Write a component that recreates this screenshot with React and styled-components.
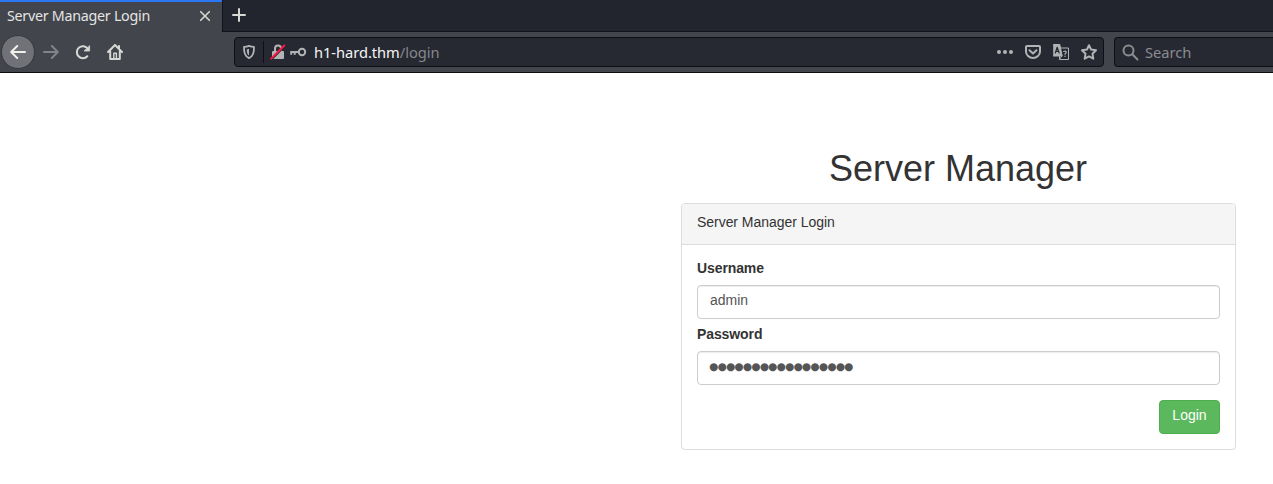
import React from "react";
import styled, { createGlobalStyle } from "styled-components";

const GlobalStyle = createGlobalStyle`
  * { box-sizing: border-box; }
  body { margin: 0; background: #fff; overflow: hidden; color: #333; font: 14px/20px "Liberation Sans", Arial, sans-serif; }
`;

const Browser = styled.header`
  height: 73px;
  background: #42454b;
  border-bottom: 1px solid #0c0c0d;
  font-family: "Noto Sans", sans-serif;
  overflow: hidden;
`;
const TabStrip = styled.div`
  display: flex;
  height: 32px;
  background: #22252e;
`;
const Tab = styled.div`
  display: flex;
  align-items: center;
  justify-content: space-between;
  width: 222px;
  height: 32px;
  padding: 0 11px 2px 7px;
  border-top: 2px solid #2a76f5;
  background: #42454b;
  color: #e3e4e3;
  font-size: 14.3px;
`;
const TabTitle = styled.span`
  letter-spacing: -0.28px;
  white-space: nowrap;
`;
const NewTab = styled.div`
  flex: 1;
  display: flex;
  align-items: center;
  padding: 0 0 1px 9px;
  border-left: 1px solid #10131a;
  border-bottom: 1px solid #10131a;
`;
const NavBar = styled.div`
  display: flex;
  align-items: center;
  height: 40px;
  padding-left: 1px;
`;
const BackButton = styled.div`
  display: grid;
  place-items: center;
  width: 34px;
  height: 34px;
  border: 1px solid #36383c;
  border-radius: 50%;
  background: #717277;
`;
const NavIcon = styled.div`
  display: grid;
  place-items: center;
  width: 32px;
  height: 32px;
`;
const Field = styled.div`
  display: flex;
  align-items: center;
  height: 30px;
  border: 1px solid #0f1016;
  border-radius: 4px;
  background: #272932;
  font-size: 14.67px;
`;
const AddressField = styled(Field)`
  width: 870px;
  margin-left: 103px;
  padding: 0 6px 0 6px;
`;
const SearchField = styled(Field)`
  flex: 1;
  margin-left: 10px;
  padding-left: 7px;
  gap: 6px;
  border-right: 0;
  border-radius: 4px 0 0 4px;
  color: #8b8c90;
`;
const Divider = styled.div`
  width: 1px;
  height: 22px;
  margin: 0 6px 0 6px;
  background: #0f1016;
`;
const KeySlot = styled.div`
  margin-left: 3px;
`;
const Url = styled.div`
  flex: 1;
  margin-left: 7px;
  color: #f5f5f6;
  letter-spacing: -0.04px;
  white-space: nowrap;
`;
const UrlPath = styled.span`
  color: #85878c;
`;
const PageActions = styled.div`
  display: flex;
  gap: 12px;
`;
const Icon = styled.svg`
  display: block;
  flex: none;
  fill: none;
  stroke: ${(p) => p.$color || "#d7d7d3"};
  stroke-width: ${(p) => p.$weight || 2};
  stroke-linecap: round;
  stroke-linejoin: round;
`;

const Page = styled.main`
  padding: 76px 0 0 681px;
`;
const LoginColumn = styled.section`
  width: 555px;
`;
const Heading = styled.h1`
  margin: 0 0 14px;
  padding-right: 1px;
  font-size: 36px;
  line-height: 40px;
  font-weight: 400;
  text-align: center;
`;
const Panel = styled.form`
  height: 247px;
  border: 1px solid #ddd;
  border-radius: 4px;
  box-shadow: 0 1px 1px rgba(0, 0, 0, 0.05);
`;
const PanelHeading = styled.div`
  height: 41px;
  padding: 8px 15px;
  border-bottom: 1px solid #ddd;
  border-radius: 3px 3px 0 0;
  background: #f5f5f5;
  letter-spacing: -0.04px;
`;
const PanelBody = styled.div`
  padding: 13px 15px 15px;
`;
const Label = styled.label`
  display: block;
  margin-bottom: 7px;
  font-weight: 700;
  letter-spacing: -0.1px;
`;
const Input = styled.div`
  height: 34px;
  margin-bottom: 5px;
  padding: 4px 12px;
  border: 1px solid #ccc;
  border-radius: 4px;
  box-shadow: inset 0 1px 1px rgba(0, 0, 0, 0.075);
  color: #555;
`;
const Secret = styled(Input)`
  margin-bottom: 15px;
  padding: 4px 11px;
  font-family: "DejaVu Sans", sans-serif;
  font-size: 10.5px;
  letter-spacing: -0.72px;
`;
const Actions = styled.div`
  display: flex;
  justify-content: flex-end;
`;
const LoginButton = styled.button`
  width: 61px;
  height: 34px;
  padding: 0 0 4px;
  border: 1px solid #4cae4c;
  border-radius: 4px;
  background: #5cb85c;
  color: #fff;
  font: inherit;
`;

const G = "#b2b3b5";

export default function App() {
  return (
    <>
      <GlobalStyle />
      <Browser>
        <TabStrip>
          <Tab>
            <TabTitle>Server Manager Login</TabTitle>
            <Icon width="12" height="12" viewBox="0 0 12 12" $weight={1.6}>
              <path d="M1.7 1.7l8.6 8.6M10.3 1.7l-8.6 8.6" />
            </Icon>
          </Tab>
          <NewTab>
            <Icon width="14" height="14" viewBox="0 0 14 14">
              <path d="M7 1v12M1 7h12" />
            </Icon>
          </NewTab>
        </TabStrip>
        <NavBar>
          <BackButton>
            <Icon width="16" height="16" viewBox="0 0 16 16" $color="#f0f0ec">
              <path d="M15 8H1.5M7.2 2L1.2 8l6 6" />
            </Icon>
          </BackButton>
          <NavIcon>
            <Icon width="16" height="16" viewBox="0 0 16 16" $color="#828387">
              <path d="M1 8h13.5M8.8 2l6 6-6 6" />
            </Icon>
          </NavIcon>
          <NavIcon>
            <Icon width="16" height="16" viewBox="0 0 16 16">
              <path d="M12.3 12.2A6 6 0 1 1 12.8 4.7" />
              <path d="M14.6 2v5H9.4z" fill="#d7d7d3" strokeWidth=".8" />
            </Icon>
          </NavIcon>
          <NavIcon>
            <Icon width="16" height="16" viewBox="0 0 16 16">
              <path d="M1 8l7-7 7 7M3.2 7v8h9.6V7M12 2v3" />
              <path d="M6.8 14V9.2h2.6V14" strokeWidth="1.4" />
            </Icon>
          </NavIcon>
          <AddressField>
            <Icon width="16" height="16" viewBox="0 0 16 16" $color={G} $weight={1.8}>
              <path d="M8 1.8c2 .8 3.5 1 5 1.1 0 5.5-.6 9-5 11.2-4.4-2.2-5-5.7-5-11.2 1.5-.1 3-.3 5-1.1z" />
              <path d="M8 4.7c-.8.4-1.6.6-2.3.7.1 2.8.5 4.9 2.3 6.2z" fill={G} stroke="none" />
            </Icon>
            <Divider />
            <Icon width="16" height="16" viewBox="0 0 16 16" $color={G}>
              <path d="M5 7V4.5a3 3 0 0 1 6 0V7" />
              <rect x="2" y="7" width="12" height="8" rx="1" fill={G} stroke="none" />
              <path d="M1.8 15L14.8 2" stroke="#272932" strokeWidth="2" />
              <path d="M1.2 14.6L14.3 1.5" stroke="#ff1744" strokeWidth="2" />
            </Icon>
            <KeySlot>
              <Icon width="18" height="16" viewBox="0 0 18 16" $color={G}>
                <circle cx="13" cy="8" r="3.2" />
                <path d="M9.5 8H1.2M2.2 8v2.8M5.7 8v2.8" strokeLinecap="butt" />
              </Icon>
            </KeySlot>
            <Url>h1-hard.thm<UrlPath>/login</UrlPath></Url>
            <PageActions>
              <Icon width="16" height="16" viewBox="0 0 16 16" $color={G}>
                <g fill={G} stroke="none"><circle cx="2" cy="8" r="2" /><circle cx="8" cy="8" r="2" /><circle cx="14" cy="8" r="2" /></g>
              </Icon>
              <Icon width="16" height="16" viewBox="0 0 16 16" $color={G}>
                <path d="M2 2h12q1 0 1 1v4.5a7 6.5 0 0 1-14 0V3q0-1 1-1z" />
                <path d="M4.5 6.2L8 9.5l3.5-3.3" />
              </Icon>
              <Icon width="16" height="16" viewBox="0 0 16 16" $color={G} $weight={1}>
                <path d="M8 4h7.5v11.5H6.5v-3" />
                <path d="M.5.5h6.3l2.4 11.5H.5z" fill={G} />
                <path d="M9 12l-2.5 3" />
                <path d="M2.3 9L4.2 3.2 6.2 9M2.9 7.3h2.7" stroke="#272932" strokeWidth="1.2" />
                <path d="M10.7 7.5q2.8-1 2.5 1-.8.7-1.2 1.7M12 12v.4" strokeWidth="1.2" />
              </Icon>
              <Icon width="16" height="16" viewBox="0 0 16 16" $color={G} $weight={2}>
                <path d="M8 1.2l2.1 4.4 4.9.7-3.5 3.4.8 5L8 12.4l-4.3 2.3.8-5L1 6.3l4.9-.7z" />
              </Icon>
            </PageActions>
          </AddressField>
          <SearchField>
            <Icon width="17" height="17" viewBox="0 0 17 17" $color="#8b8c90">
              <circle cx="6.5" cy="6.5" r="5" />
              <path d="M10.3 10.3L15.5 15.5" />
            </Icon>
            Search
          </SearchField>
        </NavBar>
      </Browser>
      <Page>
        <LoginColumn>
          <Heading>Server Manager</Heading>
          <Panel onSubmit={(e) => e.preventDefault()}>
            <PanelHeading>Server Manager Login</PanelHeading>
            <PanelBody>
              <Label>Username</Label>
              <Input>admin</Input>
              <Label>Password</Label>
              <Secret>●●●●●●●●●●●●●●●●●</Secret>
              <Actions>
                <LoginButton>Login</LoginButton>
              </Actions>
            </PanelBody>
          </Panel>
        </LoginColumn>
      </Page>
    </>
  );
}
